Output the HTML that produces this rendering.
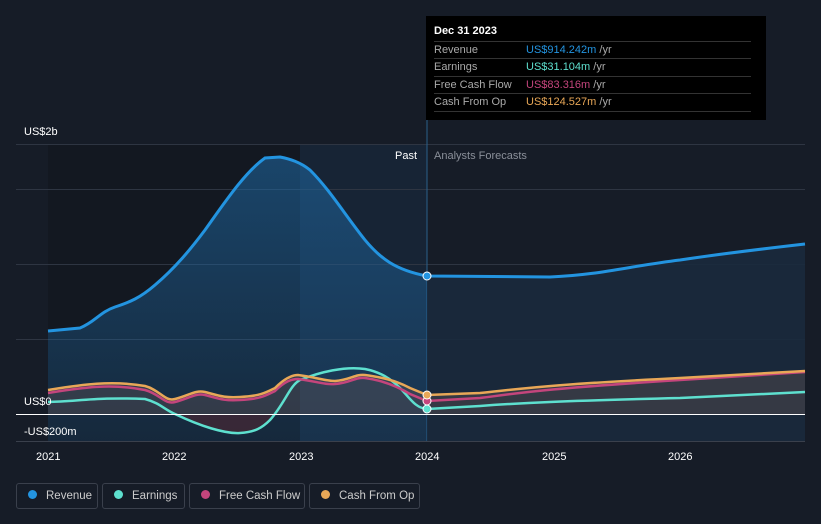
<!DOCTYPE html><html><head><style>
body{margin:0;background:#161c27;width:821px;height:524px;overflow:hidden;font-family:"Liberation Sans",sans-serif;position:relative}
.t{position:absolute;font-size:11px;color:#fff;white-space:nowrap}
.tip{position:absolute;left:426px;top:16px;width:340px;height:104px;background:#000}
.tip .h{position:absolute;left:8px;top:9px;color:#fff;font-size:11px;font-weight:bold}
.row{position:absolute;left:8px;width:317px;border-top:1px solid #333;height:17px;font-size:11px;color:#aaa;line-height:17px}
.row b{font-weight:normal;position:absolute;left:92px}
.row i{font-style:normal;color:#aaa}
.leg{position:absolute;top:483px;height:26px;border:1px solid #3a404c;border-radius:3px;font-size:11.5px;color:#ccc;line-height:25px;box-sizing:border-box;white-space:nowrap;overflow:hidden}
.leg span{display:inline-block;width:9px;height:9px;border-radius:50%;margin:0 9px 0 11px}
</style></head><body>
<svg width="821" height="524" style="position:absolute;left:0;top:0">
<defs><linearGradient id="rg" x1="0" y1="0" x2="0" y2="1"><stop offset="0" stop-color="#1f6aa6" stop-opacity=".55"/><stop offset="1" stop-color="#1f6aa6" stop-opacity=".2"/></linearGradient></defs>
<rect x="48" y="145" width="252" height="296" fill="#131821"/>
<rect x="300" y="145" width="127" height="296" fill="#172435"/>
<g stroke="#2e3542" stroke-width="1"><line x1="16" y1="144.5" x2="805" y2="144.5"/><line x1="16" y1="189.5" x2="805" y2="189.5"/><line x1="16" y1="264.5" x2="805" y2="264.5"/><line x1="16" y1="339.5" x2="805" y2="339.5"/><line x1="16" y1="441.5" x2="805" y2="441.5" stroke="#3a404c"/></g>
<line x1="427" y1="120" x2="427" y2="441" stroke="#2b5f8a"/>
<path d="M48,331 L80,328 C95,322 100,312 115,307 C130,302 140,298 155,285 C175,268 190,250 205,230 C225,202 245,172 265,158 L280,157 C290,159 300,162 310,170 C330,190 345,215 365,240 C380,258 395,270 427,276 L427,441 L48,441Z" fill="url(#rg)"/>
<path d="M427,276 L550,277 C600,275 630,266 680,260 C720,254 770,248 805,244 L805,441 L427,441Z" fill="#1a2a3d" opacity=".9"/>
<path d="M48,390 C80,385 110,380 145,386 C160,390 165,402 175,399 C190,395 195,390 205,392 C220,396 225,398 240,397 C260,396 265,393 275,388 C285,378 292,375 298,375 C315,377 325,381 335,381 C350,380 355,374 365,375 C380,377 395,380 427,395 L480,393 C520,389 540,385 680,378 L805,371 L805,414 L48,414Z" fill="#6a5a5a" opacity=".35"/>
<path d="M175,414 C200,428 225,434 240,433 C255,432 262,428 270,420 L275,414Z" fill="#5a2530" opacity=".5"/>
<path d="M48,331 L80,328 C95,322 100,312 115,307 C130,302 140,298 155,285 C175,268 190,250 205,230 C225,202 245,172 265,158 L280,157 C290,159 300,162 310,170 C330,190 345,215 365,240 C380,258 395,270 427,276 L550,277 C600,275 630,266 680,260 C720,254 770,248 805,244" fill="none" stroke="#2394e0" stroke-width="3"/>
<path d="M48,402 C80,401 100,397 145,399 C160,403 165,410 175,414 C200,426 225,434 240,433 C255,432 262,428 270,420 C285,403 290,385 300,380 C320,372 345,366 365,369 C380,372 390,378 400,388 C410,398 415,408 427,409 L480,406 C520,403 560,401 680,398 L805,392" fill="none" stroke="#5ee0cf" stroke-width="2.5"/>
<path d="M48,393 C80,388 110,383 145,390 C160,394 165,405 175,402 C190,398 195,393 205,395 C220,399 225,401 240,400 C260,399 265,396 275,391 C285,381 292,379 298,379 C315,381 325,385 335,384 C350,383 355,377 365,378 C380,380 395,385 410,394 L427,401 L480,398 C520,393 540,389 680,380 L805,372" fill="none" stroke="#c4457c" stroke-width="2.5"/>
<path d="M48,390 C80,385 110,380 145,386 C160,390 165,402 175,399 C190,395 195,390 205,392 C220,396 225,398 240,397 C260,396 265,393 275,388 C285,378 292,375 298,375 C315,377 325,381 335,381 C350,380 355,374 365,375 C380,377 395,380 410,388 L427,395 L480,393 C520,389 540,385 680,378 L805,371" fill="none" stroke="#e8a757" stroke-width="2.5"/>
<line x1="16" y1="414.5" x2="805" y2="414.5" stroke="#fff" stroke-width="1"/>
<circle cx="427" cy="276" r="4" fill="#2394e0" stroke="#fff" stroke-width="1"/>
<circle cx="427" cy="409" r="4" fill="#5ee0cf" stroke="#fff" stroke-width="1"/>
<circle cx="427" cy="401" r="4" fill="#c4457c" stroke="#fff" stroke-width="1"/>
<circle cx="427" cy="395" r="4" fill="#e8a757" stroke="#fff" stroke-width="1"/>
</svg>
<div class="t" style="left:24px;top:126px">US$2b</div>
<div class="t" style="left:24px;top:396px">US$0</div>
<div class="t" style="left:24px;top:426px">-US$200m</div>
<div class="t" style="left:395px;top:150px">Past</div>
<div class="t" style="left:434px;top:150px;color:#8a8f99">Analysts Forecasts</div>
<div class="t" style="left:36px;top:451px">2021</div>
<div class="t" style="left:162px;top:451px">2022</div>
<div class="t" style="left:289px;top:451px">2023</div>
<div class="t" style="left:415px;top:451px">2024</div>
<div class="t" style="left:542px;top:451px">2025</div>
<div class="t" style="left:668px;top:451px">2026</div>
<div class="tip"><div class="h">Dec 31 2023</div>
<div class="row" style="top:25px">Revenue<b style="color:#2394e0">US$914.242m <i>/yr</i></b></div>
<div class="row" style="top:42px">Earnings<b style="color:#5ee0cf">US$31.104m <i>/yr</i></b></div>
<div class="row" style="top:60px">Free Cash Flow<b style="color:#c4457c">US$83.316m <i>/yr</i></b></div>
<div class="row" style="top:77px;border-bottom:1px solid #333">Cash From Op<b style="color:#e8a757">US$124.527m <i>/yr</i></b></div>
</div>
<div class="leg" style="left:16px;width:82px"><span style="background:#2394e0"></span>Revenue</div>
<div class="leg" style="left:102px;width:83px"><span style="background:#5ee0cf"></span>Earnings</div>
<div class="leg" style="left:189px;width:116px"><span style="background:#c4457c"></span>Free Cash Flow</div>
<div class="leg" style="left:309px;width:111px"><span style="background:#e8a757"></span>Cash From Op</div>
</body></html>
